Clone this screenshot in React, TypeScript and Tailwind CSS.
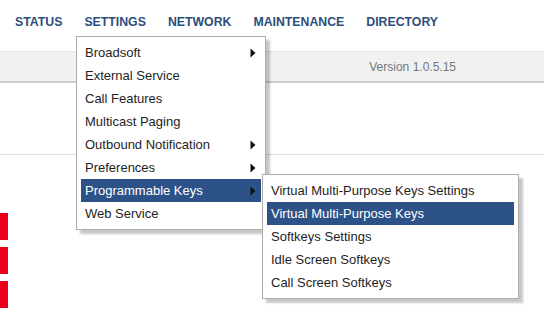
const navItems = ['STATUS', 'SETTINGS', 'NETWORK', 'MAINTENANCE', 'DIRECTORY']

const settingsItems: { label: string; sub?: boolean; active?: boolean }[] = [
  { label: 'Broadsoft', sub: true },
  { label: 'External Service' },
  { label: 'Call Features' },
  { label: 'Multicast Paging' },
  { label: 'Outbound Notification', sub: true },
  { label: 'Preferences', sub: true },
  { label: 'Programmable Keys', sub: true, active: true },
  { label: 'Web Service' },
]

const keyItems = [
  { label: 'Virtual Multi-Purpose Keys Settings' },
  { label: 'Virtual Multi-Purpose Keys', active: true },
  { label: 'Softkeys Settings' },
  { label: 'Idle Screen Softkeys' },
  { label: 'Call Screen Softkeys' },
]

function Caret() {
  return (
    <svg width="6" height="10" viewBox="0 0 6 10" aria-hidden="true">
      <path d="M0.5 0.5 L5.5 5 L0.5 9.5 Z" fill="#111" />
    </svg>
  )
}

function MenuRow({
  label,
  sub,
  active,
}: {
  label: string
  sub?: boolean
  active?: boolean
}) {
  return (
    <div
      className={`flex h-[23px] items-center justify-between pl-[4px] pr-[5px] ${
        active ? 'bg-[#2c5287] text-white' : 'text-[#1e1e1e]'
      }`}
    >
      <span>{label}</span>
      {sub && <Caret />}
    </div>
  )
}

export default function App() {
  return (
    <div className="relative h-[309px] w-[544px] overflow-hidden bg-white font-['Liberation_Sans',Arial,sans-serif]">
      <nav className="flex h-[51px] items-start gap-[22px] pl-[15px] pt-[13px] text-[12.3px] font-bold text-[#2d4d7c]">
        {navItems.map((item) => (
          <span key={item}>{item}</span>
        ))}
      </nav>

      <div className="flex h-[32px] items-center justify-end border-t border-b-2 border-t-[#e2e2e2] border-b-[#cdcdcd] bg-[#f1f1f1] pr-[88px] text-[12px] text-[#777]">
        Version 1.0.5.15
      </div>

      <div className="h-[72px] border-b border-[#dedede]" />

      <div className="mt-[58px] flex flex-col gap-[7px]">
        <div className="h-[27px] w-[8px] bg-[#e8001c]" />
        <div className="h-[27px] w-[8px] bg-[#e8001c]" />
        <div className="h-[27px] w-[8px] bg-[#e8001c]" />
      </div>

      <div className="absolute left-[76px] top-[36px] w-[190px] border border-[#adadad] bg-white p-[4px] text-[13px] shadow-[4px_4px_2px_rgba(0,0,0,0.22)]">
        {settingsItems.map((it) => (
          <MenuRow key={it.label} {...it} />
        ))}
      </div>

      <div className="absolute left-[262px] top-[174px] w-[257px] border border-[#adadad] bg-white p-[4px] text-[13px] shadow-[4px_4px_2px_rgba(0,0,0,0.22)]">
        {keyItems.map((it) => (
          <MenuRow key={it.label} {...it} />
        ))}
      </div>
    </div>
  )
}
